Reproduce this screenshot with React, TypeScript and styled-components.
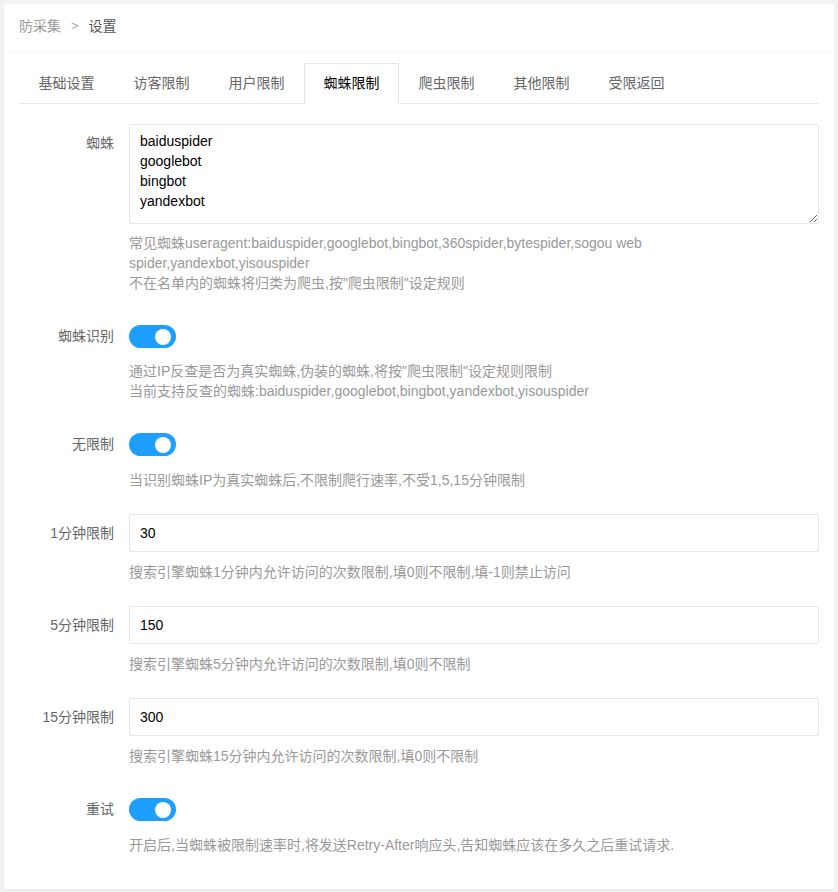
import React from "react";
import styled, { createGlobalStyle } from "styled-components";

const GlobalStyle = createGlobalStyle`
  html, body {
    margin: 0;
    padding: 0;
    background: #f2f2f2;
  }
  body {
    font-family: "Liberation Sans", Arial, "Noto Sans CJK SC", sans-serif;
    font-size: 14px;
    color: #333;
  }
  * { box-sizing: border-box; }
`;

const Page = styled.div`
  padding: 4px 4px 5px;
`;

const Card = styled.div`
  background: #fff;
  border-radius: 2px;
  box-shadow: 0 1px 2px 0 rgba(0, 0, 0, 0.05);
`;

const CardHeader = styled.div`
  height: 49px;
  padding: 12px 15px 0;
  line-height: 20px;
  display: flex;
  align-items: flex-start;
  border-bottom: 1px solid #f6f6f6;
`;

const Crumb = styled.span<{ $current?: boolean }>`
  font-size: 14px;
  color: ${(p) => (p.$current ? "#555" : "#999")};
`;

const Separator = styled.span`
  margin: 0 10px;
  color: #aaa;
  font-size: 13px;
`;

const CardBody = styled.div`
  padding: 10px 15px 10px;
`;

const TabBar = styled.ul`
  list-style: none;
  margin: 0;
  padding: 0;
  display: flex;
  height: 41px;
  border-bottom: 1px solid #e6e6e6;
`;

const Tab = styled.li<{ $active?: boolean }>`
  flex: none;
  height: 41px;
  line-height: 39px;
  padding: 0 18.5px;
  font-size: 14px;
  white-space: nowrap;
  cursor: pointer;
  color: ${(p) => (p.$active ? "#000" : "#666")};
  background: ${(p) => (p.$active ? "#fff" : "transparent")};
  border: 1px solid ${(p) => (p.$active ? "#e6e6e6" : "transparent")};
  border-bottom-color: ${(p) => (p.$active ? "#fff" : "transparent")};
  border-radius: 2px 2px 0 0;
`;

const Form = styled.div`
  padding-top: 20px;
`;

const Item = styled.div`
  margin-bottom: 24px;
`;

const Row = styled.div`
  display: flex;
  align-items: flex-start;
  min-height: 38px;
`;

const Label = styled.label`
  flex: 0 0 110px;
  padding: 9px 15px 9px 0;
  line-height: 20px;
  text-align: right;
  color: #666;
  font-size: 14px;
  white-space: nowrap;
`;

const Control = styled.div`
  flex: 1;
  min-width: 0;
`;

const TextArea = styled.textarea`
  display: block;
  width: 100%;
  min-height: 100px;
  height: 100px;
  padding: 6px 10px;
  line-height: 20px;
  font-family: inherit;
  font-size: 14px;
  color: #000;
  border: 1px solid #e6e6e6;
  border-radius: 2px;
  resize: vertical;
  outline: none;
`;

const Input = styled.input`
  display: block;
  width: 100%;
  height: 38px;
  padding: 0 10px;
  font-family: inherit;
  font-size: 14px;
  color: #000;
  border: 1px solid #e6e6e6;
  border-radius: 2px;
  outline: none;
`;

const Switch = styled.div<{ $on?: boolean }>`
  position: relative;
  width: 47px;
  height: 23px;
  margin-top: 8px;
  border-radius: 20px;
  background: ${(p) => (p.$on ? "#1e9fff" : "#d2d2d2")};
  cursor: pointer;
`;

const Knob = styled.i<{ $on?: boolean }>`
  position: absolute;
  top: 3.5px;
  left: ${(p) => (p.$on ? "26px" : "5px")};
  width: 16px;
  height: 16px;
  border-radius: 50%;
  background: #fff;
`;

const Help = styled.div<{ $gap: number }>`
  margin: ${(p) => p.$gap}px 0 0 110px;
  line-height: 20px;
  font-size: 14px;
  color: #999;
`;

const tabs = ["基础设置", "访客限制", "用户限制", "蜘蛛限制", "爬虫限制", "其他限制", "受限返回"];

const Toggle: React.FC<{ on: boolean }> = ({ on }) => (
  <Switch $on={on}>
    <Knob $on={on} />
  </Switch>
);

export default function App() {
  return (
    <>
      <GlobalStyle />
      <Page>
        <Card>
          <CardHeader>
            <Crumb>防采集</Crumb>
            <Separator>&gt;</Separator>
            <Crumb $current>设置</Crumb>
          </CardHeader>
          <CardBody>
            <TabBar>
              {tabs.map((t) => (
                <Tab key={t} $active={t === "蜘蛛限制"}>
                  {t}
                </Tab>
              ))}
            </TabBar>

            <Form>
              <Item>
                <Row>
                  <Label>蜘蛛</Label>
                  <Control>
                    <TextArea
                      defaultValue={"baiduspider\ngooglebot\nbingbot\nyandexbot"}
                    />
                  </Control>
                </Row>
                <Help $gap={9}>
                  常见蜘蛛useragent:baiduspider,googlebot,bingbot,360spider,bytespider,sogou web spider,yandexbot,yisouspider
                  <br />
                  不在名单内的蜘蛛将归类为爬虫,按"爬虫限制"设定规则
                </Help>
              </Item>

              <Item>
                <Row>
                  <Label>蜘蛛识别</Label>
                  <Control>
                    <Toggle on />
                  </Control>
                </Row>
                <Help $gap={6}>
                  通过IP反查是否为真实蜘蛛,伪装的蜘蛛,将按"爬虫限制"设定规则限制
                  <br />
                  当前支持反查的蜘蛛:baiduspider,googlebot,bingbot,yandexbot,yisouspider
                </Help>
              </Item>

              <Item>
                <Row>
                  <Label>无限制</Label>
                  <Control>
                    <Toggle on />
                  </Control>
                </Row>
                <Help $gap={7}>当识别蜘蛛IP为真实蜘蛛后,不限制爬行速率,不受1,5,15分钟限制</Help>
              </Item>

              <Item>
                <Row>
                  <Label>1分钟限制</Label>
                  <Control>
                    <Input defaultValue="30" />
                  </Control>
                </Row>
                <Help $gap={10}>搜索引擎蜘蛛1分钟内允许访问的次数限制,填0则不限制,填-1则禁止访问</Help>
              </Item>

              <Item>
                <Row>
                  <Label>5分钟限制</Label>
                  <Control>
                    <Input defaultValue="150" />
                  </Control>
                </Row>
                <Help $gap={10}>搜索引擎蜘蛛5分钟内允许访问的次数限制,填0则不限制</Help>
              </Item>

              <Item>
                <Row>
                  <Label>15分钟限制</Label>
                  <Control>
                    <Input defaultValue="300" />
                  </Control>
                </Row>
                <Help $gap={10}>搜索引擎蜘蛛15分钟内允许访问的次数限制,填0则不限制</Help>
              </Item>

              <Item>
                <Row>
                  <Label>重试</Label>
                  <Control>
                    <Toggle on />
                  </Control>
                </Row>
                <Help $gap={7}>
                  开启后,当蜘蛛被限制速率时,将发送Retry-After响应头,告知蜘蛛应该在多久之后重试请求.
                </Help>
              </Item>
            </Form>
          </CardBody>
        </Card>
      </Page>
    </>
  );
}
